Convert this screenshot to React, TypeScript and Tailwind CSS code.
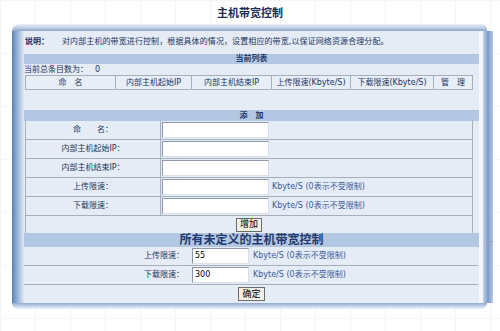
const cjk = { fontFamily: '"DejaVu Sans", "Noto Sans CJK SC", sans-serif' };

const listCols = [
  { label: "命　名", w: "w-[90px]" },
  { label: "内部主机起始IP", w: "w-[76px]" },
  { label: "内部主机结束IP", w: "w-[80px]" },
  { label: "上传限速(Kbyte/S)", w: "w-[79px]" },
  { label: "下载限速(Kbyte/S)", w: "w-[83px]" },
  { label: "管　理", w: "flex-1" },
];

const addRows = [
  { label: "命　　名：", unit: false },
  { label: "内部主机起始IP：", unit: false },
  { label: "内部主机结束IP：", unit: false },
  { label: "上传限速：", unit: true },
  { label: "下载限速：", unit: true },
];

function Band({ title, className = "" }: { title: string; className?: string }) {
  return (
    <div
      className={`flex items-center justify-center bg-[#b3c7e2] font-bold text-[#1f3a6e] ${className}`}
    >
      {title}
    </div>
  );
}

function Btn({ label }: { label: string }) {
  return (
    <button className="h-[14px] px-[3px] border border-[#6b6b6b] bg-[#f1efe6] text-[9px] leading-none text-black">
      {label}
    </button>
  );
}

export default function App() {
  return (
    <div
      style={cjk}
      className="w-[500px] h-[331px] overflow-hidden bg-white bg-[linear-gradient(to_right,#f3f4f7_1px,transparent_1px),linear-gradient(to_bottom,#f5f6f8_1px,transparent_1px)] bg-[size:35px_53px] text-[8px] text-[#22355f]"
    >
      <div className="h-[24px] pt-[6px] flex justify-center text-[11px] font-bold text-[#1d2b55]">
        主机带宽控制
      </div>

      <div className="ml-[12px] w-[481px]">
        <div className="h-[7px] mr-[6px] rounded-tl-[9px] rounded-tr-[7px] bg-gradient-to-b from-[#e9eff7] via-[#c4d3e8] to-[#8aa5cc]" />
        <div className="flex">
          <div className="w-[12px] bg-gradient-to-r from-[#5d80b6] via-[#9fb7da] to-[#e3eaf4]" />
          <div className="w-[455px] bg-[#e5ecf5] flex flex-col">
            <div className="h-[22px] flex items-center pl-[1px]">
              <span className="font-bold text-[#1d2f5e]">说明：</span>
              <span className="ml-[13px] tracking-[0.1px]">
                对内部主机的带宽进行控制，根据具体的情况，设置相应的带宽,以保证网络资源合理分配。
              </span>
            </div>
            <Band title="当前列表" className="h-[10px] mt-[1px]" />
            <div className="h-[11px] flex items-center">
              当前总条目数为：<span className="ml-[7px]">0</span>
            </div>
            <div className="ml-[1px] w-[448px] h-[15px] flex border border-[#a7afbb] bg-[#e8eef6]">
              {listCols.map((c, i) => (
                <div
                  key={c.label}
                  className={`${c.w} flex items-center justify-center ${i < listCols.length - 1 ? "border-r border-[#a7afbb]" : ""}`}
                >
                  {c.label}
                </div>
              ))}
            </div>
            <div className="h-[20px]" />
            <Band title="添　加" className="h-[11px]" />
            <div className="ml-[1px] w-[448px] border-x border-[#a7afbb]">
              {addRows.map((r) => (
                <div key={r.label} className="h-[19px] flex border-b border-[#a7afbb]">
                  <div className="w-[135px] flex items-center justify-center border-r border-[#a7afbb]">
                    {r.label}
                  </div>
                  <div className="flex-1 flex items-center pl-[1px]">
                    <div className="w-[107px] h-[16px] bg-white border border-[#8d99aa] border-b-[#d9dfe8] border-r-[#d9dfe8]" />
                    {r.unit && (
                      <span className="ml-[3px] text-[#3c5a98]">Kbyte/S (0表示不受限制)</span>
                    )}
                  </div>
                </div>
              ))}
              <div className="h-[17px] flex items-center justify-center">
                <Btn label="增加" />
              </div>
            </div>
            <Band title="所有未定义的主机带宽控制" className="h-[14px] text-[12px] text-[#1d4596]" />
            {[
              ["上传限速：", "55"],
              ["下载限速：", "300"],
            ].map(([label, val]) => (
              <div key={label} className="h-[19px] flex items-center border-b border-[#a7afbb] mr-[1px]">
                <div className="w-[163px] text-right pr-[3px]">{label}</div>
                <div className="ml-[5px] w-[57px] h-[16px] bg-white border border-[#8d99aa] border-b-[#d9dfe8] border-r-[#d9dfe8] flex items-center pl-[2px] text-[8px] text-black">
                  {val}
                </div>
                <span className="ml-[4px] text-[#3c5a98]">Kbyte/S (0表示不受限制)</span>
              </div>
            ))}
            <div className="h-[18px] flex items-center justify-center">
              <Btn label="确定" />
            </div>
          </div>
          <div className="w-[4px] bg-[#f4f7fb]" />
          <div className="w-[10px] bg-gradient-to-r from-[#c6d4e9] via-[#7c9ccb] to-[#b9cbe4]" />
        </div>
        <div className="h-[6px] mr-[6px] rounded-b-[6px] bg-gradient-to-b from-[#8fa9cf] via-[#c3d2e7] to-[#eef2f8]" />
      </div>
      <div className="ml-[486px] -mt-[70px] text-[7px] text-[#9aa3b0]">LT</div>
    </div>
  );
}
